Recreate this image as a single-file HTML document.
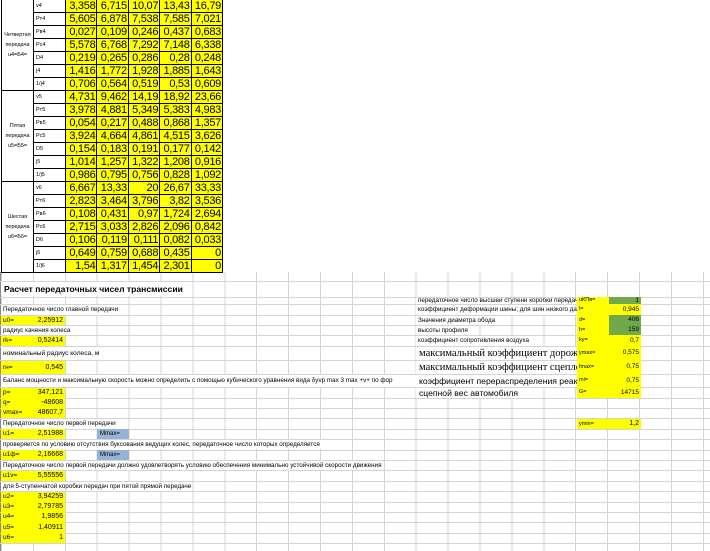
<!DOCTYPE html>
<html><head><meta charset="utf-8">
<style>
*{margin:0;padding:0;box-sizing:border-box}
body{width:710px;height:551px;overflow:hidden;background:#fff;position:relative;font-family:"Liberation Sans","DejaVu Sans",sans-serif;color:#000}
table.t{position:absolute;left:1px;top:-1px;border-collapse:collapse;table-layout:fixed}
table.t td{border:1px solid #000;height:13px;padding:0;white-space:nowrap;overflow:hidden}
table.t td.n{background:#ffff00;text-align:right;font-size:11px;letter-spacing:-0.3px;padding-right:1px;line-height:11px}
table.t td.l{font-size:5.5px;padding-left:2px;background:#fff}
table.t td.g{font-size:5.5px;text-align:center;line-height:10.3px;vertical-align:middle}
.grid{position:absolute;left:1px;top:272px;width:709px;height:279px;background:repeating-linear-gradient(to right,#d4d4d4 0,#d4d4d4 1px,transparent 1px,transparent 31.9px)}
.h{position:absolute;left:0;width:710px;height:1px;background:#d4d4d4}
.a{position:absolute;white-space:nowrap;font-size:6.3px;background:#fff;padding-left:2px;padding-right:1px}
.y{position:absolute;background:#ffff00;white-space:nowrap;font-size:6.5px}
.y .k{position:absolute;left:2px;top:0}
.y .v{position:absolute;right:2px;top:0;font-size:7px}
.b{position:absolute;background:#95b3d7;font-size:6px;padding-left:3px}
.gr{position:absolute;background:#70a84c}
</style></head><body>
<div style="position:absolute;left:0;top:0;width:1px;height:551px;background:#888"></div>
<div class="grid"></div>
<div class="h" style="top:281px"></div><div class="h" style="top:297px"></div><div class="h" style="top:304px"></div><div class="h" style="top:315px"></div><div class="h" style="top:325px"></div><div class="h" style="top:335px"></div><div class="h" style="top:346px"></div><div class="h" style="top:360px"></div><div class="h" style="top:374px"></div><div class="h" style="top:387px"></div><div class="h" style="top:398px"></div><div class="h" style="top:408px"></div><div class="h" style="top:418px"></div><div class="h" style="top:429px"></div><div class="h" style="top:439px"></div><div class="h" style="top:450px"></div><div class="h" style="top:460px"></div><div class="h" style="top:470px"></div><div class="h" style="top:481px"></div><div class="h" style="top:491px"></div><div class="h" style="top:502px"></div><div class="h" style="top:512px"></div><div class="h" style="top:522px"></div><div class="h" style="top:533px"></div><div class="h" style="top:543px"></div>
<div style="position:absolute;left:0;top:0;width:710px;height:272px;background:#fff"></div>

<table class="t">
<colgroup><col style="width:32px"><col style="width:32px"><col style="width:31.4px"><col style="width:31.4px"><col style="width:31.4px"><col style="width:31.4px"><col style="width:31.4px"></colgroup>
<tr><td class="g" rowspan="7">Четвертая<br>передача<br>u4=Б4=</td><td class="l">v4</td><td class="n">3,358</td><td class="n">6,715</td><td class="n">10,07</td><td class="n">13,43</td><td class="n">16,79</td></tr>
<tr><td class="l">Pт4</td><td class="n">5,605</td><td class="n">6,878</td><td class="n">7,538</td><td class="n">7,585</td><td class="n">7,021</td></tr>
<tr><td class="l">Pв4</td><td class="n">0,027</td><td class="n">0,109</td><td class="n">0,246</td><td class="n">0,437</td><td class="n">0,683</td></tr>
<tr><td class="l">Pc4</td><td class="n">5,578</td><td class="n">6,768</td><td class="n">7,292</td><td class="n">7,148</td><td class="n">6,338</td></tr>
<tr><td class="l">D4</td><td class="n">0,219</td><td class="n">0,265</td><td class="n">0,286</td><td class="n">0,28</td><td class="n">0,248</td></tr>
<tr><td class="l">j4</td><td class="n">1,416</td><td class="n">1,772</td><td class="n">1,928</td><td class="n">1,885</td><td class="n">1,643</td></tr>
<tr><td class="l">1/j4</td><td class="n">0,706</td><td class="n">0,564</td><td class="n">0,519</td><td class="n">0,53</td><td class="n">0,609</td></tr>
<tr><td class="g" rowspan="7">Пятая<br>передача<br>u5=Б5=</td><td class="l">v5</td><td class="n">4,731</td><td class="n">9,462</td><td class="n">14,19</td><td class="n">18,92</td><td class="n">23,66</td></tr>
<tr><td class="l">Pт5</td><td class="n">3,978</td><td class="n">4,881</td><td class="n">5,349</td><td class="n">5,383</td><td class="n">4,983</td></tr>
<tr><td class="l">Pв5</td><td class="n">0,054</td><td class="n">0,217</td><td class="n">0,488</td><td class="n">0,868</td><td class="n">1,357</td></tr>
<tr><td class="l">Pc5</td><td class="n">3,924</td><td class="n">4,664</td><td class="n">4,861</td><td class="n">4,515</td><td class="n">3,626</td></tr>
<tr><td class="l">D5</td><td class="n">0,154</td><td class="n">0,183</td><td class="n">0,191</td><td class="n">0,177</td><td class="n">0,142</td></tr>
<tr><td class="l">j5</td><td class="n">1,014</td><td class="n">1,257</td><td class="n">1,322</td><td class="n">1,208</td><td class="n">0,916</td></tr>
<tr><td class="l">1/j5</td><td class="n">0,986</td><td class="n">0,795</td><td class="n">0,756</td><td class="n">0,828</td><td class="n">1,092</td></tr>
<tr><td class="g" rowspan="7">Шестая<br>передача<br>u6=Б6=</td><td class="l">v6</td><td class="n">6,667</td><td class="n">13,33</td><td class="n">20</td><td class="n">26,67</td><td class="n">33,33</td></tr>
<tr><td class="l">Pт6</td><td class="n">2,823</td><td class="n">3,464</td><td class="n">3,796</td><td class="n">3,82</td><td class="n">3,536</td></tr>
<tr><td class="l">Pв6</td><td class="n">0,108</td><td class="n">0,431</td><td class="n">0,97</td><td class="n">1,724</td><td class="n">2,694</td></tr>
<tr><td class="l">Pc6</td><td class="n">2,715</td><td class="n">3,033</td><td class="n">2,826</td><td class="n">2,096</td><td class="n">0,842</td></tr>
<tr><td class="l">D6</td><td class="n">0,106</td><td class="n">0,119</td><td class="n">0,111</td><td class="n">0,082</td><td class="n">0,033</td></tr>
<tr><td class="l">j6</td><td class="n">0,649</td><td class="n">0,759</td><td class="n">0,688</td><td class="n">0,435</td><td class="n">0</td></tr>
<tr><td class="l">1/j6</td><td class="n">1,54</td><td class="n">1,317</td><td class="n">1,454</td><td class="n">2,301</td><td class="n">0</td></tr>
</table>

<!-- left lower -->
<div class="a" style="left:1px;top:282px;height:14px;line-height:14px;font-size:8.6px;font-weight:bold;padding-left:3px">Расчет передаточных чисел трансмиссии</div>
<div class="a" style="left:1px;top:305px;height:10px;line-height:10px">Передаточное число главной передачи</div>
<div class="y" style="left:1px;top:316px;width:64px;height:9px;line-height:9px"><span class="k">u0=</span><span class="v">2,25912</span></div>
<div class="a" style="left:1px;top:326px;height:9px;line-height:9px">радиус качения колеса</div>
<div class="y" style="left:1px;top:336px;width:64px;height:10px;line-height:10px"><span class="k">rk=</span><span class="v">0,52414</span></div>
<div class="a" style="left:1px;top:347px;height:13px;line-height:13px;font-size:6.6px">номинальный радиус колеса, м</div>
<div class="y" style="left:1px;top:361px;width:64px;height:13px;line-height:13px"><span class="k">rн=</span><span class="v">0,545</span></div>
<div class="a" style="left:1px;top:375px;height:12px;line-height:12px;width:417px;overflow:hidden">Баланс мощности и максимальную скорость можно определить с помощью кубического уравнения вида δуvр max 3 max +v+ по фор</div>
<div class="y" style="left:1px;top:388px;width:64px;height:29px"></div>
<div class="y" style="left:1px;top:388px;width:64px;height:10px;line-height:10px"><span class="k">p=</span><span class="v">347,121</span></div>
<div class="y" style="left:1px;top:398px;width:64px;height:10px;line-height:10px"><span class="k">q=</span><span class="v">-48608</span></div>
<div class="y" style="left:1px;top:408px;width:64px;height:10px;line-height:10px"><span class="k">vmax=</span><span class="v">48607,7</span></div>
<div class="a" style="left:1px;top:419px;height:9px;line-height:9px">Передаточное число первой передачи</div>
<div class="y" style="left:1px;top:429px;width:64px;height:10px;line-height:10px"><span class="k">u1=</span><span class="v">2,51988</span></div>
<div class="b" style="left:97px;top:429px;width:32px;height:10px;line-height:10px">Mmax=</div>
<div class="a" style="left:1px;top:440px;height:9px;line-height:9px">проверяется по условию отсутствия буксования ведущих колес, передаточное число которых определяется</div>
<div class="y" style="left:1px;top:450px;width:64px;height:10px;line-height:10px"><span class="k">u1ф=</span><span class="v">2,16668</span></div>
<div class="b" style="left:97px;top:450px;width:32px;height:10px;line-height:10px">Mmax=</div>
<div class="a" style="left:1px;top:461px;height:9px;line-height:9px">Передаточное число первой передачи должно удовлетворять условию обеспечения минимально устойчивой скорости движения</div>
<div class="y" style="left:1px;top:471px;width:64px;height:10px;line-height:10px"><span class="k">u1v=</span><span class="v">5,55556</span></div>
<div class="a" style="left:1px;top:482px;height:9px;line-height:9px">для 5-ступенчатой коробки передач при пятой прямой передаче</div>
<div class="y" style="left:1px;top:492px;width:64px;height:51px"></div>
<div class="y" style="left:1px;top:492px;width:64px;height:10px;line-height:10px"><span class="k">u2=</span><span class="v">3,94259</span></div>
<div class="y" style="left:1px;top:502px;width:64px;height:10px;line-height:10px"><span class="k">u3=</span><span class="v">2,79785</span></div>
<div class="y" style="left:1px;top:512px;width:64px;height:10px;line-height:10px"><span class="k">u4=</span><span class="v">1,9856</span></div>
<div class="y" style="left:1px;top:522px;width:64px;height:11px;line-height:11px"><span class="k">u5=</span><span class="v">1,40911</span></div>
<div class="y" style="left:1px;top:533px;width:64px;height:10px;line-height:10px"><span class="k">u6=</span><span class="v">1</span></div>

<!-- right -->
<div class="y" style="left:577px;top:297px;width:64px;height:101px"></div>
<div class="gr" style="left:609px;top:297px;width:32px;height:7px"></div>
<div class="gr" style="left:609px;top:315px;width:32px;height:20px"></div>
<div class="a" style="left:416px;top:298px;height:6px;line-height:6px;width:161px;overflow:hidden">передаточное число высшей ступени коробки передач</div>
<div class="a" style="left:416px;top:305px;height:10px;line-height:10px;width:161px;overflow:hidden">коэффициент деформации шины; для шин низкого давления</div>
<div class="a" style="left:416px;top:316px;height:9px;line-height:9px">Значения диаметра обода</div>
<div class="a" style="left:416px;top:326px;height:9px;line-height:9px">высоты профиля</div>
<div class="a" style="left:416px;top:336px;height:10px;line-height:10px">коэффициент сопротивления воздуха</div>
<div class="a" style="left:416px;top:347px;height:13px;line-height:13px;width:161px;overflow:hidden;font-family:'Liberation Serif',serif;font-size:10.5px;padding-left:3px">максимальный коэффициент дорожного</div>
<div class="a" style="left:416px;top:361px;height:13px;line-height:13px;width:161px;overflow:hidden;font-family:'Liberation Serif',serif;font-size:10.5px;padding-left:3px">максимальный коэффициент сцепления</div>
<div class="a" style="left:416px;top:375px;height:12px;line-height:12px;width:161px;overflow:hidden;font-size:8.6px;padding-left:3px">коэффициент перераспределения реакций</div>
<div class="a" style="left:416px;top:388px;height:10px;line-height:10px;font-size:8.6px;padding-left:3px">сцепной вес автомобиля</div>
<div style="position:absolute;left:579px;top:297px;font-size:5.5px;line-height:7px">uКПв=</div><div style="position:absolute;right:71px;top:297px;font-size:6.5px;line-height:7px">1</div>
<div style="position:absolute;left:579px;top:304px;font-size:5.5px;line-height:11px">l=</div><div style="position:absolute;right:71px;top:304px;font-size:6.5px;line-height:11px">0,945</div>
<div style="position:absolute;left:579px;top:315px;font-size:5.5px;line-height:10px">d=</div><div style="position:absolute;right:71px;top:315px;font-size:6.5px;line-height:10px">406</div>
<div style="position:absolute;left:579px;top:325px;font-size:5.5px;line-height:10px">h=</div><div style="position:absolute;right:71px;top:325px;font-size:6.5px;line-height:10px">159</div>
<div style="position:absolute;left:579px;top:335px;font-size:5.5px;line-height:11px">ky=</div><div style="position:absolute;right:71px;top:335px;font-size:6.5px;line-height:11px">0,7</div>
<div style="position:absolute;left:579px;top:346px;font-size:5.5px;line-height:14px">ymax=</div><div style="position:absolute;right:71px;top:346px;font-size:6.5px;line-height:14px">0,575</div>
<div style="position:absolute;left:579px;top:360px;font-size:5.5px;line-height:14px">fmax=</div><div style="position:absolute;right:71px;top:360px;font-size:6.5px;line-height:14px">0,75</div>
<div style="position:absolute;left:579px;top:374px;font-size:5.5px;line-height:13px">mi=</div><div style="position:absolute;right:71px;top:374px;font-size:6.5px;line-height:13px">0,75</div>
<div style="position:absolute;left:579px;top:387px;font-size:5.5px;line-height:11px">G=</div><div style="position:absolute;right:71px;top:387px;font-size:6.5px;line-height:11px">14715</div>
<div class="y" style="left:577px;top:419px;width:64px;height:10px;line-height:10px"><span class="k" style="font-size:5.5px">ymin=</span><span class="v">1,2</span></div>
</body></html>
